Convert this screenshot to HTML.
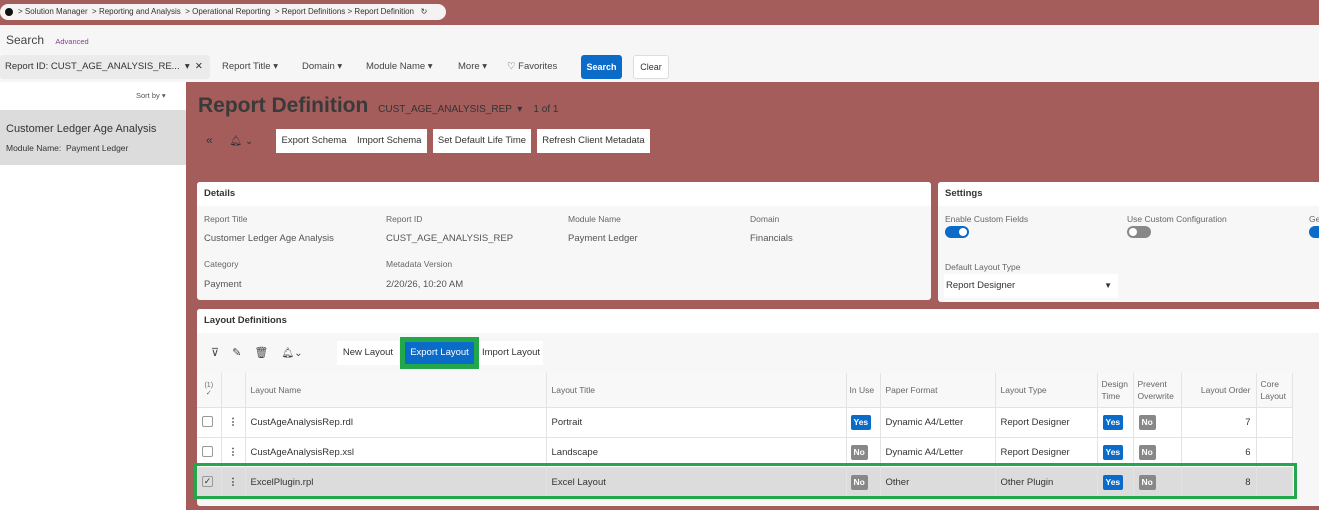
<!DOCTYPE html>
<html><head><style>
*{box-sizing:border-box;margin:0;padding:0}
body{width:1319px;height:510px;overflow:hidden;background:#a45d5b;font-family:"Liberation Sans",sans-serif;color:#333;position:relative;font-size:10px}
.a{position:absolute}
.pill{left:0;top:4px;width:446px;height:16px;background:#f4f2f2;border-radius:8px;font-size:8px;line-height:16px;padding-left:18px;color:#333;white-space:nowrap}
.top{left:0;top:25px;width:1319px;height:57px;background:#f7f6f6}
.btnw{background:#fff;font-size:9.5px;line-height:24px;text-align:center;color:#333}
.card{background:#f7f7f7;border-radius:3px;overflow:hidden}
.ch{background:#fff;height:24px;line-height:24px;padding-left:7px;font-weight:bold;font-size:9.5px;color:#333}
.lbl{font-size:8.5px;color:#666}
.val{font-size:9.5px;color:#555}
.badge{display:inline-block;color:#fff;font-weight:bold;font-size:8.5px;border-radius:2px;padding:0 3px;height:15px;line-height:15px}
.yes{background:#0b6bc9}.no{background:#888}
table{border-collapse:collapse;position:absolute;left:197px;top:373px;font-size:9.5px}
td{border-right:1px solid #e3e3e3;border-bottom:1px solid #e3e3e3;padding:0 5px;white-space:nowrap;background:#fff}
tr.h td{height:34px;font-size:8.5px;color:#666;background:#f8f8f8}
tr.r td{height:30px}
tr.s td{background:#dcdcdc}
.cb{display:inline-block;width:11px;height:11px;border:1px solid #999;border-radius:2px;background:#fff;vertical-align:middle;font-size:9px;line-height:9px;text-align:center}
.f{position:absolute;top:55px;font-size:9.5px;line-height:24px;color:#444;white-space:nowrap}
</style></head><body>
<div class="a pill"><span style="position:absolute;left:5px;top:4px;width:8px;height:8px;border-radius:50%;background:#111"></span>&gt; Solution Manager &nbsp;&gt; Reporting and Analysis &nbsp;&gt; Operational Reporting &nbsp;&gt; Report Definitions &gt; Report Definition &nbsp; ↻</div>
<div class="a top"></div>
<div class="a" style="left:6px;top:33px;font-size:12px;color:#444">Search <span style="font-size:7.5px;color:#8a3a9a;margin-left:8px">Advanced</span></div>
<div class="a" style="left:0;top:55px;width:210px;height:24px;background:#ecebeb;border-radius:3px;font-size:9.5px;line-height:24px;padding-left:5px">Report ID: CUST_AGE_ANALYSIS_RE... &nbsp;▾ &nbsp;✕</div>
<div class="f" style="left:222px">Report Title ▾</div>
<div class="f" style="left:302px">Domain ▾</div>
<div class="f" style="left:366px">Module Name ▾</div>
<div class="f" style="left:458px">More ▾</div>
<div class="f" style="left:507px">♡ Favorites</div>
<div class="a" style="left:581px;top:55px;width:41px;height:24px;background:#0b6bc9;color:#fff;border-radius:3px;font-size:9px;line-height:24px;text-align:center;font-weight:bold">Search</div>
<div class="a" style="left:633px;top:55px;width:36px;height:24px;background:#fff;border:1px solid #ddd;border-radius:3px;font-size:9px;line-height:22px;text-align:center">Clear</div>
<div class="a" style="left:0;top:82px;width:186px;height:428px;background:#fff"></div>
<div class="a" style="left:136px;top:91px;font-size:7.5px;color:#555">Sort by ▾</div>
<div class="a" style="left:0;top:110px;width:186px;height:55px;background:#dcdcdc"></div>
<div class="a" style="left:6px;top:123px;font-size:11px;color:#333">Customer Ledger Age Analysis</div>
<div class="a" style="left:6px;top:143px;font-size:8.5px;color:#333">Module Name: &nbsp;Payment Ledger</div>
<div class="a" style="left:198px;top:94px;font-size:21px;font-weight:bold;color:#3a3a3a">Report Definition <span style="font-size:10px;font-weight:normal;color:#333;margin-left:4px">CUST_AGE_ANALYSIS_REP &nbsp;▾ &nbsp;&nbsp;&nbsp;1 of 1</span></div>
<div class="a" style="left:206px;top:133px;font-size:12px;color:#333">«&nbsp;&nbsp;&nbsp;&nbsp; <span style="font-size:10px">🔔︎ ⌄</span></div>
<div class="a btnw" style="left:276px;top:129px;width:151px;height:24px">Export Schema &nbsp;&nbsp;&nbsp;Import Schema</div>
<div class="a btnw" style="left:433px;top:129px;width:98px;height:24px">Set Default Life Time</div>
<div class="a btnw" style="left:537px;top:129px;width:113px;height:24px">Refresh Client Metadata</div>

<div class="a card" style="left:197px;top:182px;width:734px;height:118px"><div class="ch">Details</div>
<div class="a lbl" style="left:7px;top:32px">Report Title</div><div class="a val" style="left:7px;top:51px">Customer Ledger Age Analysis</div>
<div class="a lbl" style="left:189px;top:32px">Report ID</div><div class="a val" style="left:189px;top:51px">CUST_AGE_ANALYSIS_REP</div>
<div class="a lbl" style="left:371px;top:32px">Module Name</div><div class="a val" style="left:371px;top:51px">Payment Ledger</div>
<div class="a lbl" style="left:553px;top:32px">Domain</div><div class="a val" style="left:553px;top:51px">Financials</div>
<div class="a lbl" style="left:7px;top:77px">Category</div><div class="a val" style="left:7px;top:97px">Payment</div>
<div class="a lbl" style="left:189px;top:77px">Metadata Version</div><div class="a val" style="left:189px;top:97px">2/20/26, 10:20 AM</div>
</div>
<div class="a card" style="left:938px;top:182px;width:390px;height:120px"><div class="ch">Settings</div>
<div class="a lbl" style="left:7px;top:32px">Enable Custom Fields</div>
<div class="a" style="left:7px;top:44px;width:24px;height:12px;border-radius:6px;background:#0b6bc9"><div class="a" style="right:2px;top:2px;width:8px;height:8px;border-radius:50%;background:#fff"></div></div>
<div class="a lbl" style="left:189px;top:32px">Use Custom Configuration</div>
<div class="a" style="left:189px;top:44px;width:24px;height:12px;border-radius:6px;background:#888"><div class="a" style="left:2px;top:2px;width:8px;height:8px;border-radius:50%;background:#fff"></div></div>
<div class="a lbl" style="left:371px;top:32px">Ge</div>
<div class="a" style="left:371px;top:44px;width:24px;height:12px;border-radius:6px;background:#0b6bc9"></div>
<div class="a lbl" style="left:7px;top:80px">Default Layout Type</div>
<div class="a" style="left:6px;top:92px;width:174px;height:24px;background:#fff;font-size:9.5px;line-height:24px;padding-left:2px">Report Designer<span style="position:absolute;right:6px;font-size:8px">▼</span></div>
</div>

<div class="a card" style="left:197px;top:309px;width:1130px;height:197px"><div class="ch">Layout Definitions</div></div>
<div class="a" style="left:211px;top:346px;font-size:11px;color:#444;word-spacing:10px">⊽ ✎ 🗑︎ <span style="font-size:10px">🔔︎⌄</span></div>
<div class="a btnw" style="left:337px;top:341px;width:62px;height:24px">New Layout</div>
<div class="a" style="left:400px;top:337px;width:79px;height:32px;background:#22a84a"></div>
<div class="a" style="left:405px;top:342px;width:69px;height:22px;background:#0b6bc9;color:#fff;font-size:9.5px;line-height:22px;text-align:center">Export Layout</div>
<div class="a btnw" style="left:479px;top:341px;width:64px;height:24px">Import Layout</div>

<table>
<tr class="h"><td style="width:24px;font-size:7px;text-align:center">(1)<br>✓</td><td style="width:24px"></td><td style="width:301px">Layout Name</td><td style="width:300px">Layout Title</td><td style="width:34px;padding:0 3px">In Use</td><td style="width:115px">Paper Format</td><td style="width:102px">Layout Type</td><td style="width:36px;padding:0 4px;white-space:normal;line-height:12px">Design Time</td><td style="width:48px;padding:0 4px;white-space:normal;line-height:12px">Prevent Overwrite</td><td style="width:75px;text-align:right">Layout Order</td><td style="width:36px;padding:0 4px;white-space:normal;line-height:12px">Core Layout</td></tr>
<tr class="r"><td><span class="cb"></span></td><td style="text-align:center;font-weight:bold">⋮</td><td>CustAgeAnalysisRep.rdl</td><td>Portrait</td><td style="padding:0 4px"><span class="badge yes">Yes</span></td><td>Dynamic A4/Letter</td><td>Report Designer</td><td><span class="badge yes">Yes</span></td><td><span class="badge no">No</span></td><td style="text-align:right">7</td><td></td></tr>
<tr class="r"><td><span class="cb"></span></td><td style="text-align:center;font-weight:bold">⋮</td><td>CustAgeAnalysisRep.xsl</td><td>Landscape</td><td style="padding:0 4px"><span class="badge no">No</span></td><td>Dynamic A4/Letter</td><td>Report Designer</td><td><span class="badge yes">Yes</span></td><td><span class="badge no">No</span></td><td style="text-align:right">6</td><td></td></tr>
<tr class="r s"><td><span class="cb" style="background:#ddd">✓</span></td><td style="text-align:center;font-weight:bold">⋮</td><td>ExcelPlugin.rpl</td><td>Excel Layout</td><td style="padding:0 4px"><span class="badge no">No</span></td><td>Other</td><td>Other Plugin</td><td><span class="badge yes">Yes</span></td><td><span class="badge no">No</span></td><td style="text-align:right">8</td><td></td></tr>
</table>
<div class="a" style="left:194px;top:463px;width:1103px;height:36px;border:3px solid #22a84a"></div>
</body></html>
